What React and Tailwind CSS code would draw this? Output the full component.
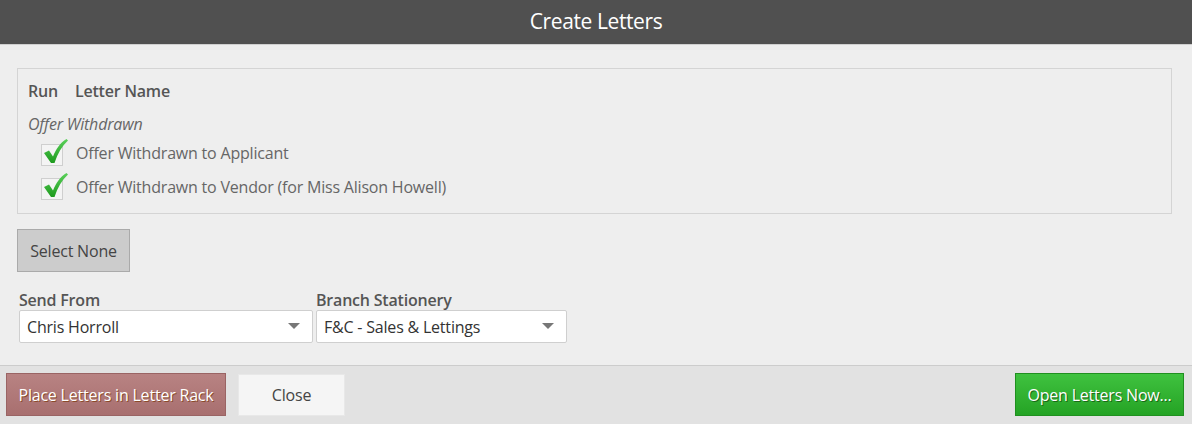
import React from "react";

const font = { fontFamily: '"Open Sans", "Noto Sans", sans-serif' };

function Check() {
  return (
    <div className="relative w-[23px] h-[23px] shrink-0">
      <div className="absolute left-0 top-[3px] w-[22px] h-[22px] bg-[#f4f4f4] border border-[#cfcfcf]" />
      <svg className="absolute left-[2px] top-[-3px]" width="26" height="27" viewBox="0 0 26 27">
        <defs>
          <linearGradient id="g" x1="0" y1="0" x2="0" y2="1">
            <stop offset="0" stopColor="#5ad05a" />
            <stop offset="1" stopColor="#1d9a1d" />
          </linearGradient>
        </defs>
        <path d="M1 15 L6 12.5 L10 18.5 C13 11 17 5 23.5 1 L25 2.5 C19 8 14.5 15.5 11.5 25 L8 25 Z" fill="url(#g)" />
      </svg>
    </div>
  );
}

function Select({ value, width }) {
  return (
    <div className={`${width} h-[33px] bg-white border border-[#cfcfcf] rounded-[2px] flex items-center justify-between pl-[7px] pr-[12px]`}>
      <span className="text-[16px] text-[#333] tracking-[-0.2px]">{value}</span>
      <svg width="12" height="7" viewBox="0 0 12 7"><path d="M0 0 L12 0 L6 6 Z" fill="#777" /></svg>
    </div>
  );
}

export default function App() {
  return (
    <div className="w-[1192px] h-[424px] bg-[#eeeeee] flex flex-col" style={font}>
      <div className="h-[45px] bg-[#505050] border-b border-[#cfcfcf] flex items-center justify-center">
        <span className="text-white text-[21px] tracking-[-0.4px]">Create Letters</span>
      </div>
      <div className="flex-1 px-[17px] pt-[23px]">
        <div className="w-[1155px] h-[146px] border border-[#d4d4d4] pl-[10px] pt-[11px]">
          <div className="flex gap-[17px] text-[16px] font-semibold text-[#555] h-[22px] items-center tracking-[-0.2px]">
            <span>Run</span>
            <span>Letter Name</span>
          </div>
          <div className="mt-[11px] text-[16px] italic text-[#666] h-[22px] flex items-center tracking-[-0.2px]">Offer Withdrawn</div>
          <div className="mt-[6px] flex flex-col gap-[11px] pl-[13px]">
            <div className="flex items-center gap-[12px] h-[23px]">
              <Check />
              <span className="text-[16px] text-[#666] tracking-[-0.2px]">Offer Withdrawn to Applicant</span>
            </div>
            <div className="flex items-center gap-[12px] h-[23px]">
              <Check />
              <span className="text-[16px] text-[#666] tracking-[-0.2px]">Offer Withdrawn to Vendor (for Miss Alison Howell)</span>
            </div>
          </div>
        </div>
        <div className="mt-[15px] w-[113px] h-[43px] bg-[#cccccc] border border-[#aaaaaa] flex items-center justify-center text-[16px] text-[#444] tracking-[-0.2px]">
          Select None
        </div>
        <div className="mt-[18px] flex gap-[3px] pl-[2px]">
          <div className="flex flex-col">
            <span className="text-[16px] font-semibold text-[#555] leading-[20px] tracking-[-0.2px]">Send From</span>
            <Select value="Chris Horroll" width="w-[294px]" />
          </div>
          <div className="flex flex-col">
            <span className="text-[16px] font-semibold text-[#555] leading-[20px] tracking-[-0.2px]">Branch Stationery</span>
            <Select value="F&C - Sales & Lettings" width="w-[251px]" />
          </div>
        </div>
      </div>
      <div className="h-[59px] bg-[#e2e2e2] border-t border-[#cccccc] flex items-center px-[6px] pb-[1px]">
        <div className="w-[220px] h-[43px] bg-gradient-to-b from-[#b88383] to-[#a86f6f] border border-[#9a6464] flex items-center justify-center text-[16px] text-white tracking-[-0.2px] [text-shadow:1px_1px_0_#8a4a2a]">
          Place Letters in Letter Rack
        </div>
        <div className="ml-[12px] w-[107px] h-[42px] bg-[#f5f5f5] border border-[#e8e8e8] flex items-center justify-center text-[16px] text-[#444] tracking-[-0.2px]">
          Close
        </div>
        <div className="ml-auto mr-[2px] w-[169px] h-[43px] bg-gradient-to-b from-[#3fc23f] to-[#24a324] border border-[#209020] flex items-center justify-center text-[16px] text-white tracking-[-0.2px] [text-shadow:1px_1px_0_#1a6a1a]">
          Open Letters Now...
        </div>
      </div>
    </div>
  );
}
